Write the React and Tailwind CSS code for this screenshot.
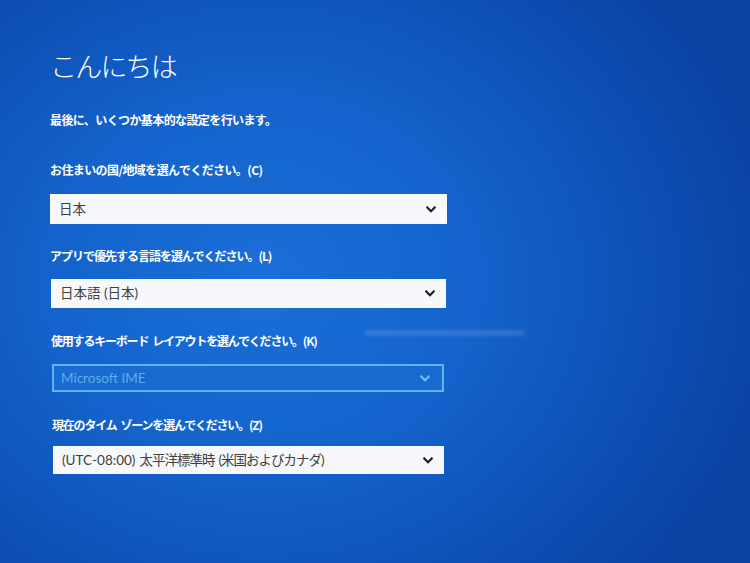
import React from "react";

const jp = { fontFamily: '"Noto Sans CJK JP", "Noto Sans", sans-serif' };
const ui = { fontFamily: 'Lato, "Noto Sans CJK JP", sans-serif' };

function Chevron({ color = "#1f1f1f" }) {
  return (
    <svg width="10" height="7" viewBox="0 0 10 7" fill="none">
      <polyline points="1.3,1.5 5,5.2 8.7,1.5" stroke={color} strokeWidth="2.2" strokeLinecap="square" />
    </svg>
  );
}

function Select({ children, w, h, muted }) {
  if (muted) {
    return (
      <div
        className={`flex items-center justify-between border-2 border-[#5cb6ee] bg-[#196ad1] pl-[7px] pr-[12px] ${w} ${h}`}
      >
        <span className="text-[13.5px] text-[#5eaee8]" style={ui}>{children}</span>
        <Chevron color="#6cc0f2" />
      </div>
    );
  }
  return (
    <div className={`flex items-center justify-between bg-[#f6f8fb] pl-[9px] pr-[11px] ${w} ${h}`}>
      <span className="text-[13.5px] text-[#404040]" style={ui}>{children}</span>
      <Chevron />
    </div>
  );
}

function Label({ children, className = "" }) {
  return (
    <div className={`text-[12px] leading-[20px] font-bold text-white ${className}`} style={jp}>
      {children}
    </div>
  );
}

export default function App() {
  return (
    <div className="relative w-[750px] h-[563px] overflow-hidden bg-[radial-gradient(ellipse_70%_80%_at_35%_50%,#1b6fd8_0%,#1463cc_40%,#0d4fb4_75%,#0a41a2_100%)]">
      {/* glare streak on the screen */}
      <div className="absolute left-[365px] top-[331px] w-[160px] h-[4px] rounded-full bg-white/20 blur-[2px]" />
      <div className="pl-[50px] pt-[48px] flex flex-col">
        <h1 className="text-[27px] leading-[36px] font-light text-white tracking-[-1.8px]" style={jp}>こんにちは</h1>
        <Label className="mt-[26px] tracking-[-0.6px]">最後に、いくつか基本的な設定を行います。</Label>

        <Label className="mt-[30px] tracking-[-0.6px]">お住まいの国/地域を選んでください。(C)</Label>
        <div className="mt-[14px]">
          <Select w="w-[397px]" h="h-[30px]">日本</Select>
        </div>

        <Label className="mt-[22px] tracking-[-1px]">アプリで優先する言語を選んでください。(L)</Label>
        <div className="mt-[13px] pl-[1px]">
          <Select w="w-[395px]" h="h-[29px]">日本語 (日本)</Select>
        </div>

        <Label className="mt-[23px] pl-[1px] tracking-[-1.2px]">
          使用するキーボード<span className="ml-[4px]">レイアウトを選んでください。(K)</span>
        </Label>
        <div className="mt-[13px] pl-[2px]">
          <Select w="w-[392px]" h="h-[28px]" muted>Microsoft IME</Select>
        </div>

        <Label className="mt-[23px] pl-[2px] tracking-[-1.2px]">
          現在のタイム<span className="ml-[4px]">ゾーンを選んでください。(Z)</span>
        </Label>
        <div className="mt-[11px] pl-[3px]">
          <Select w="w-[391px]" h="h-[28px]">
            (UTC-08:00)
            <span className="ml-[4px] tracking-[-1px]">太平洋標準時</span>
            <span className="ml-[4px] tracking-[-1px]">(米国およびカナダ)</span>
          </Select>
        </div>
      </div>
    </div>
  );
}
